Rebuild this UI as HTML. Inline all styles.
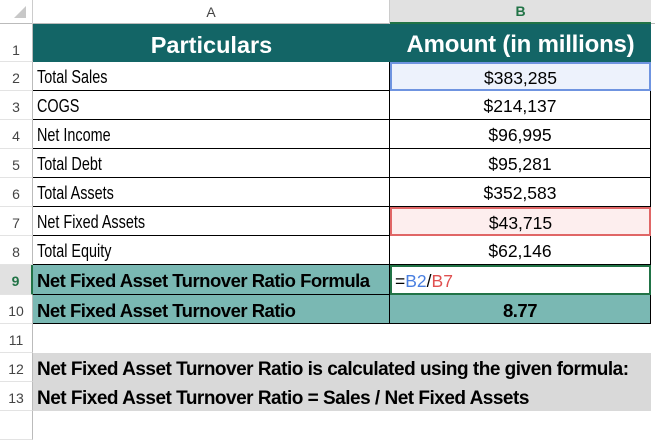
<!DOCTYPE html>
<html><head><style>
*{margin:0;padding:0;box-sizing:border-box}
body{width:655px;height:414px;background:#fff;font-family:"Liberation Sans",sans-serif;position:relative;overflow:hidden;color:#000}
.a{position:absolute}
.rh{position:absolute;left:0;width:33px;text-align:center;font-size:14px;color:#444;background:#fff;border-bottom:1px solid #e3e3e3;border-right:1px solid #bbb}
.cell{position:absolute;font-size:17.5px;white-space:nowrap;display:flex;align-items:center;padding-top:3px;border-bottom:1px solid #000}
.A{left:33px;width:357px;padding-left:4px;border-right:1px solid #000;font-size:18px}
.A span.n{display:inline-block;transform:scaleX(0.8);transform-origin:left center}
.B{left:390px;width:261px;justify-content:center;border-right:1px solid #000}
.t{background:#7ab8b3;font-weight:bold;font-size:18.5px;letter-spacing:-0.5px}
</style></head><body>
<div class="a" style="left:0;top:0;width:655px;height:24px;background:#fff;border-bottom:1px solid #bbb"></div>
<div class="a" style="left:0;top:0;width:33px;height:24px;border-right:1px solid #ccc"></div>
<div class="a" style="left:14px;top:6px;width:0;height:0;border-left:12px solid transparent;border-bottom:12px solid #c8c8c8"></div>
<div class="a" style="left:33px;top:0;width:357px;height:24px;text-align:center;font-size:14px;line-height:24px;color:#444;border-right:1px solid #ccc">A</div>
<div class="a" style="left:390px;top:0;width:261px;height:24px;text-align:center;font-size:14px;line-height:22px;color:#217346;font-weight:bold;background:#e1e1e1;border-bottom:2px solid #217346">B</div>
<div class="a" style="left:33px;top:24px;width:618px;height:38px;background:#136566"></div>
<div class="a" style="left:33px;top:29px;width:357px;text-align:center;color:#fff;font-weight:bold;font-size:23.5px;line-height:32px">Particulars</div>
<div class="a" style="left:390px;top:29px;width:261px;text-align:center;color:#fff;font-weight:bold;font-size:24px;line-height:32px;letter-spacing:-0.2px">Amount (in millions)</div>
<div class="rh" style="top:24px;height:38px;line-height:52px">1</div>

<div class="rh" style="top:62px;height:29px;line-height:32px">2</div>
<div class="cell A" style="top:62px;height:29px"><span class="n">Total Sales</span></div>
<div class="cell B" style="top:62px;height:29px;background:#edf2fc;border:2px solid #6f94e0">$383,285</div>
<div class="rh" style="top:91px;height:29px;line-height:32px">3</div>
<div class="cell A" style="top:91px;height:29px"><span class="n">COGS</span></div>
<div class="cell B" style="top:91px;height:29px">$214,137</div>
<div class="rh" style="top:120px;height:29px;line-height:32px">4</div>
<div class="cell A" style="top:120px;height:29px"><span class="n">Net Income</span></div>
<div class="cell B" style="top:120px;height:29px">$96,995</div>
<div class="rh" style="top:149px;height:29px;line-height:32px">5</div>
<div class="cell A" style="top:149px;height:29px"><span class="n">Total Debt</span></div>
<div class="cell B" style="top:149px;height:29px">$95,281</div>
<div class="rh" style="top:178px;height:29px;line-height:32px">6</div>
<div class="cell A" style="top:178px;height:29px"><span class="n">Total Assets</span></div>
<div class="cell B" style="top:178px;height:29px">$352,583</div>
<div class="rh" style="top:207px;height:29px;line-height:32px">7</div>
<div class="cell A" style="top:207px;height:29px"><span class="n">Net Fixed Assets</span></div>
<div class="cell B" style="top:207px;height:29px;background:#fdeeee;border:2px solid #e06666">$43,715</div>
<div class="rh" style="top:236px;height:29px;line-height:32px">8</div>
<div class="cell A" style="top:236px;height:29px"><span class="n">Total Equity</span></div>
<div class="cell B" style="top:236px;height:29px">$62,146</div>
<div class="rh" style="top:265px;height:30px;line-height:33px;color:#217346;font-weight:bold;background:#e1e1e1;border-right:2px solid #217346">9</div>
<div class="cell A t" style="top:265px;height:30px">Net Fixed Asset Turnover Ratio Formula</div>
<div class="cell B" style="top:265px;height:30px;justify-content:flex-start;padding-left:3px;border:2px solid #217346">=<span style="color:#4a7fe0">B2</span>/<span style="color:#e05050">B7</span></div>
<div class="rh" style="top:295px;height:29px;line-height:32px">10</div>
<div class="cell A t" style="top:295px;height:29px">Net Fixed Asset Turnover Ratio</div>
<div class="cell B t" style="top:295px;height:29px">8.77</div>
<div class="rh" style="top:324px;height:29px;line-height:32px">11</div>
<div class="rh" style="top:353px;height:29px;line-height:32px">12</div>
<div class="rh" style="top:382px;height:29px;line-height:32px">13</div>
<div class="rh" style="top:411px;height:29px"></div>
<div class="a" style="left:33px;top:353px;width:618px;height:58px;background:#d9d9d9"></div>
<div class="a" style="left:37px;top:354px;height:29px;line-height:31px;font-weight:bold;font-size:19px;letter-spacing:-0.5px;white-space:nowrap">Net Fixed Asset Turnover Ratio is calculated using the given formula:</div>
<div class="a" style="left:37px;top:383px;height:29px;line-height:31px;font-weight:bold;font-size:19px;letter-spacing:-0.5px;white-space:nowrap">Net Fixed Asset Turnover Ratio = Sales / Net Fixed Assets</div>
</body></html>
